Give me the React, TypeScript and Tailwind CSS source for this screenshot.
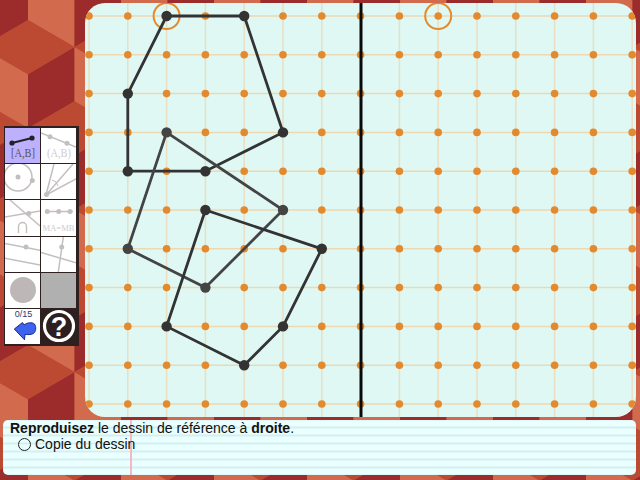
const gridX = Array.from({ length: 15 }, (_, i) => 89 + 38.8 * i);
const gridY = Array.from({ length: 11 }, (_, j) => 16 + 38.8 * j);

// sommets du dessin, en indices de grille
const shapes: { pts: number[][]; color: string }[] = [
  { pts: [[1, 2], [2, 0], [4, 0], [5, 3], [3, 4], [1, 4]], color: '#333333' },
  { pts: [[2, 3], [5, 5], [3, 7], [1, 6]], color: '#444444' },
  { pts: [[3, 5], [6, 6], [5, 8], [4, 9], [2, 8]], color: '#333333' },
];

function Cubes() {
  const dx = 46.5;
  const dy = 27.08;
  const e = 54.17;
  const cubes: number[][] = [];
  for (let row = -1; row < 7; row++) {
    for (let col = -1; col < 9; col++) {
      cubes.push([28 + col * 93 + (row % 2 !== 0 ? dx : 0), 74.2 + row * 81.25]);
    }
  }
  return (
    <svg className="absolute inset-0" width="640" height="480" viewBox="0 0 640 480">
      <rect width="640" height="480" fill="#bc4a33" />
      {cubes.map(([x, y], i) => (
        <g key={i}>
          <polygon points={`${x},${y} ${x - dx},${y - dy} ${x - dx},${y + dy} ${x},${y + e}`} fill="#d26b4e" />
          <polygon points={`${x},${y} ${x + dx},${y - dy} ${x + dx},${y + dy} ${x},${y + e}`} fill="#9c2b2c" />
          <polygon points={`${x},${y} ${x - dx},${y - dy} ${x},${y - e} ${x + dx},${y - dy}`} fill="#bc4a33" />
        </g>
      ))}
    </svg>
  );
}

function Board() {
  return (
    <svg width="551" height="414" viewBox="85 3 551 414" className="block">
      {gridX.map((x) => (
        <line key={x} x1={x} x2={x} y1="0" y2="420" stroke="#e8dfc4" strokeWidth="1.5" />
      ))}
      {gridY.map((y) => (
        <line key={y} x1="80" x2="640" y1={y} y2={y} stroke="#ecd9b4" strokeWidth="1.5" />
      ))}
      {gridX.map((x) =>
        gridY.map((y) => <circle key={`${x}-${y}`} cx={x} cy={y} r="3.8" fill="#e38a2e" />)
      )}
      <circle cx={gridX[2]} cy={gridY[0]} r="13" fill="none" stroke="#e38a2e" strokeWidth="2" />
      <circle cx={gridX[9]} cy={gridY[0]} r="13" fill="none" stroke="#e38a2e" strokeWidth="2" />
      <line x1="361" x2="361" y1="0" y2="420" stroke="#0a0a0a" strokeWidth="3" />
      {shapes.map((s, i) => (
        <g key={i}>
          <polygon
            points={s.pts.map(([a, b]) => `${gridX[a]},${gridY[b]}`).join(' ')}
            fill="none"
            stroke={s.color}
            strokeWidth="2.8"
          />
          {s.pts.map(([a, b]) => (
            <circle key={`${a}-${b}`} cx={gridX[a]} cy={gridY[b]} r="5.2" fill={s.color} />
          ))}
        </g>
      ))}
    </svg>
  );
}

const serif = "'Liberation Serif', serif";
const gray = '#c4bfbf';

function Tool({ active, dark, children }: { active?: boolean; dark?: boolean; children: React.ReactNode }) {
  const bg = active ? 'bg-[#bdb0ff]' : dark ? 'bg-[#2f2020]' : 'bg-white';
  return (
    <div className={`${bg} overflow-hidden`}>
      <svg width="35" height="35" viewBox="0 0 35 35" className="block">
        {children}
      </svg>
    </div>
  );
}

function Toolbar() {
  return (
    <div className="grid w-[75px] h-[220px] grid-cols-[35px_35px] grid-rows-[repeat(6,35.2px)] gap-x-[1px] gap-y-[1px] bg-[#2f2020] px-[1px] py-[2px]">
      <Tool active>
        <line x1="7" y1="15" x2="27" y2="10" stroke="#222" strokeWidth="2" />
        <circle cx="7" cy="15" r="2.6" fill="#222" />
        <circle cx="27" cy="10" r="2.6" fill="#222" />
        <text x="6" y="29" fontFamily={serif} fontSize="12" textLength="24" lengthAdjust="spacingAndGlyphs" fill="#555">[A,B]</text>
      </Tool>
      <Tool>
        <line x1="0" y1="5" x2="35" y2="19" stroke={gray} strokeWidth="1.5" />
        <circle cx="9" cy="8.7" r="2.5" fill={gray} />
        <circle cx="26" cy="15.3" r="2.5" fill={gray} />
        <text x="6" y="29" fontFamily={serif} fontSize="12" textLength="24" lengthAdjust="spacingAndGlyphs" fill="#d0cccc">(A,B)</text>
      </Tool>
      <Tool>
        <circle cx="13" cy="13" r="14" fill="none" stroke={gray} strokeWidth="1.5" />
        <circle cx="13" cy="13" r="2.5" fill={gray} />
        <circle cx="27.3" cy="16.5" r="2.5" fill={gray} />
      </Tool>
      <Tool>
        <line x1="5" y1="31" x2="13" y2="0" stroke={gray} strokeWidth="1.5" />
        <line x1="5" y1="31" x2="32" y2="0" stroke={gray} strokeWidth="1.5" />
        <line x1="5" y1="31" x2="35" y2="15" stroke={gray} strokeWidth="1.5" />
        <path d="M11 16 Q16 17 17 22" fill="none" stroke={gray} strokeWidth="1" />
        <circle cx="5.5" cy="30.5" r="2.5" fill={gray} />
      </Tool>
      <Tool>
        <line x1="5" y1="0" x2="35" y2="26" stroke={gray} strokeWidth="1.5" />
        <line x1="0" y1="17" x2="35" y2="11" stroke={gray} strokeWidth="1.5" />
        <circle cx="23.7" cy="13.5" r="2.5" fill={gray} />
        <path d="M13.5 33 V26.5 a4 4 0 0 1 8 0 V33" fill="none" stroke={gray} strokeWidth="1.4" />
      </Tool>
      <Tool>
        <line x1="4" y1="11.5" x2="32" y2="11.5" stroke={gray} strokeWidth="1.5" />
        <circle cx="6.3" cy="11.5" r="2.5" fill={gray} />
        <circle cx="17.7" cy="11.5" r="2.5" fill={gray} />
        <circle cx="29" cy="11.5" r="2.5" fill={gray} />
        <text x="1.5" y="31" fontFamily={serif} fontSize="8.6" fill="#d0cccc">MA=MB</text>
      </Tool>
      <Tool>
        <line x1="0" y1="6.5" x2="35" y2="13.3" stroke={gray} strokeWidth="1.5" />
        <line x1="0" y1="21.3" x2="35" y2="28" stroke={gray} strokeWidth="1.5" />
        <circle cx="21" cy="10" r="2.5" fill={gray} />
      </Tool>
      <Tool>
        <line x1="0" y1="15.5" x2="35" y2="25.7" stroke={gray} strokeWidth="1.5" />
        <line x1="22.3" y1="0" x2="17.3" y2="35" stroke={gray} strokeWidth="1.5" />
        <circle cx="20.7" cy="10" r="2.5" fill={gray} />
      </Tool>
      <Tool>
        <circle cx="18" cy="17" r="13" fill="#bdb7b7" />
      </Tool>
      <Tool>
        <rect width="35" height="35" fill="#b0b0b0" />
      </Tool>
      <Tool>
        <text x="18.5" y="8" textAnchor="middle" fontFamily="'Liberation Sans', sans-serif" fontSize="9" fill="#2a3a70">0/15</text>
        <path
          d="M9.3 20 L17.5 13.5 L19 16 C22 13.5 27 13 29.5 15 C31.5 18 31 22.5 28.5 24.5 C26 26 22 25.5 20 25.5 L19.5 30.8 Z"
          fill="#3d63ee"
          stroke="#1a2a90"
          strokeWidth="1"
          strokeLinejoin="round"
        />
      </Tool>
      <Tool dark>
        <circle cx="18" cy="17" r="14.5" fill="none" stroke="#fff" strokeWidth="3.2" />
        <text x="18" y="27" textAnchor="middle" fontFamily="'Liberation Sans', sans-serif" fontWeight="700" fontSize="27" fill="#fff">?</text>
      </Tool>
    </div>
  );
}

export default function App() {
  return (
    <div className="relative h-[480px] w-[640px] overflow-hidden font-['Liberation_Sans',sans-serif]">
      <Cubes />
      <div className="relative flex flex-col pt-[3px]">
        <div className="flex h-[414px]">
          <div className="w-[85px] pl-[4px] pt-[123px]">
            <Toolbar />
          </div>
          <div className="h-[414px] w-[551px] overflow-hidden rounded-[20px] bg-[#dff8f4]">
            <Board />
          </div>
        </div>
        <div className="relative ml-[3px] mt-[3px] h-[55px] w-[633px] overflow-hidden rounded-[5px] bg-[#eaffff] bg-[repeating-linear-gradient(to_bottom,transparent_0,transparent_6.5px,#d6eef0_6.5px,#d6eef0_8px)] bg-[position:0_0.5px] pl-[7px] text-[14px] leading-[16px] text-[#111]">
          <div className="absolute bottom-0 left-[127px] top-0 w-[1.5px] bg-[#f4b8c0]" />
          <p className="relative">
            <b>Reproduisez</b> le dessin de référence à <b>droite</b>.
          </p>
          <div className="relative flex items-center gap-[4px] pl-[8px]">
            <span className="h-[13px] w-[13px] rounded-full border-[1.5px] border-[#222]" />
            <span>Copie du dessin</span>
          </div>
        </div>
      </div>
    </div>
  );
}
